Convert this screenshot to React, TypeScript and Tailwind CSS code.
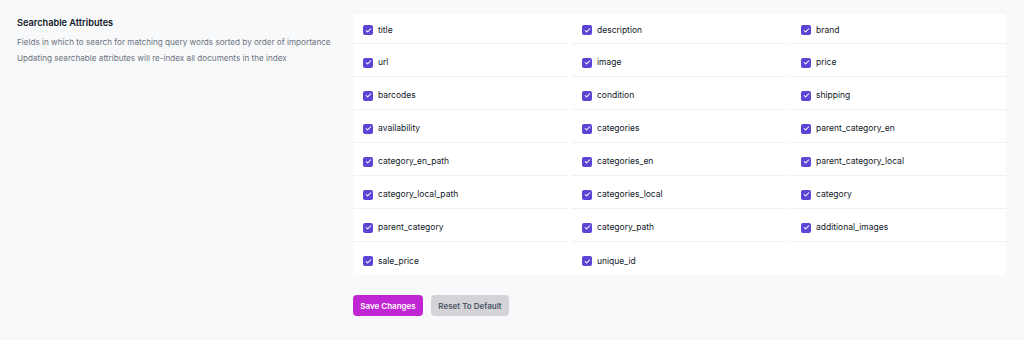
import { Check } from "lucide-react";

const attributes = [
  "title",
  "description",
  "brand",
  "url",
  "image",
  "price",
  "barcodes",
  "condition",
  "shipping",
  "availability",
  "categories",
  "parent_category_en",
  "category_en_path",
  "categories_en",
  "parent_category_local",
  "category_local_path",
  "categories_local",
  "category",
  "parent_category",
  "category_path",
  "additional_images",
  "sale_price",
  "unique_id",
];

const App = () => {
  const rows = Math.ceil(attributes.length / 3);

  return (
    <div
      className="w-[1024px] h-[340px] bg-[#f8f9fa] flex"
      style={{ fontFamily: "Inter, 'Noto Sans', sans-serif" }}
    >
      <div className="w-[353px] pl-[17px] pt-[17px]">
        <h2 className="text-[9.2px] leading-[12px] font-semibold text-[#111827]">
          Searchable Attributes
        </h2>
        <p className="mt-[5px] text-[8.15px] leading-[16px] text-[#6b7280]">
          Fields in which to search for matching query words sorted by order of
          importance
        </p>
        <p className="text-[8.15px] leading-[16px] text-[#6b7280]">
          Updating searchable attributes will re-index all documents in the
          index
        </p>
      </div>

      <div className="pt-[14px]">
        <div className="w-[653px] bg-white rounded-[3px] grid grid-cols-3 gap-x-1">
          {attributes.map((name, i) => {
            const row = Math.floor(i / 3);
            const isFirst = row === 0;
            const isLast = row === rows - 1;
            return (
              <label
                key={name}
                className={`flex items-center gap-[5px] pl-[10px] ${
                  isFirst ? "h-[30px] pt-[3px]" : "h-[33px] pt-[5px]"
                } ${isLast ? "" : "border-b border-[#f0f1f3]"}`}
              >
                <span className="w-[10px] h-[10px] rounded-[2px] bg-[#5a45d4] flex items-center justify-center">
                  <Check size={7} strokeWidth={3.5} className="text-white" />
                </span>
                <span className="text-[8.5px] text-[#111827]">{name}</span>
              </label>
            );
          })}
          {attributes.length % 3 !== 0 && <div className="h-[33px]" />}
        </div>

        <div className="flex gap-2 mt-[20px]">
          <button className="h-[21px] w-[70px] rounded-[4px] bg-[#c026d3] text-white text-[8px] font-semibold">
            Save Changes
          </button>
          <button className="h-[21px] w-[78px] rounded-[4px] bg-[#d4d4d8] text-[#4b5563] text-[8px] font-semibold">
            Reset To Default
          </button>
        </div>
      </div>
    </div>
  );
};

export default App;
